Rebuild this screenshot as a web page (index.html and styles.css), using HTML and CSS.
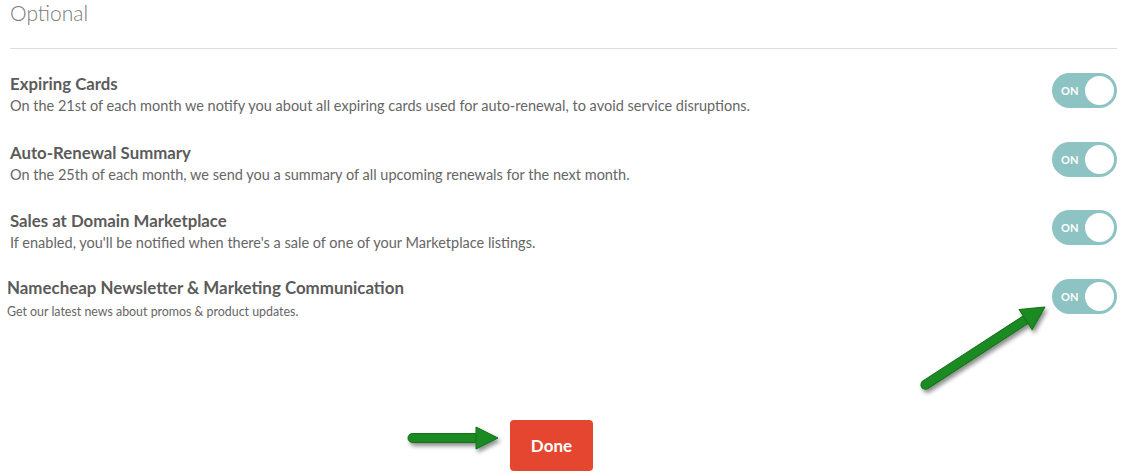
FILE: index.html
```html
<!DOCTYPE html>
<html lang="en">
<head>
    <meta charset="UTF-8">
    <title>Notification Settings</title>
    <link rel="stylesheet" href="styles.css">
</head>
<body>

    <main class="settings">
        <h2 class="heading">Optional</h2>

        <div class="option-list">
            <div class="option">
                <div class="option-text">
                    <div class="option-title">Expiring Cards</div>
                    <div class="option-desc">On the 21st of each month we notify you about all expiring cards used for auto-renewal, to avoid service disruptions.</div>
                </div>
                <div class="toggle"><span class="toggle-label">ON</span><span class="knob"></span></div>
            </div>

            <div class="option">
                <div class="option-text">
                    <div class="option-title">Auto-Renewal Summary</div>
                    <div class="option-desc">On the 25th of each month, we send you a summary of all upcoming renewals for the next month.</div>
                </div>
                <div class="toggle"><span class="toggle-label">ON</span><span class="knob"></span></div>
            </div>

            <div class="option">
                <div class="option-text">
                    <div class="option-title">Sales at Domain Marketplace</div>
                    <div class="option-desc">If enabled, you'll be notified when there's a sale of one of your Marketplace listings.</div>
                </div>
                <div class="toggle"><span class="toggle-label">ON</span><span class="knob"></span></div>
            </div>

            <div class="option option-newsletter">
                <div class="option-text">
                    <div class="option-title">Namecheap Newsletter &amp; Marketing Communication</div>
                    <div class="option-desc">Get our latest news about promos &amp; product updates.</div>
                </div>
                <div class="toggle"><span class="toggle-label">ON</span><span class="knob"></span></div>
            </div>
        </div>

        <div class="actions">
            <button type="button" class="done-button">Done</button>
        </div>
    </main>

    <!-- annotation arrows drawn over the page -->
    <svg class="annotations" width="1124" height="476" viewBox="0 0 1124 476">
        <defs>
            <filter id="shadow" x="-20%" y="-20%" width="140%" height="140%">
                <feDropShadow dx="2" dy="3" stdDeviation="2" flood-color="#000" flood-opacity="0.45"/>
            </filter>
        </defs>
        <g filter="url(#shadow)" fill="#1b8a22" stroke="#14701a" stroke-width="1">
            <g transform="translate(925 385) rotate(-33)">
                <rect x="-4" y="-4.5" width="130" height="9" rx="4.5"/>
                <path d="M120 -12 L143 0 L120 12 Z" stroke-linejoin="round"/>
            </g>
            <g transform="translate(412 438)">
                <rect x="-4" y="-4.5" width="72" height="9" rx="4.5"/>
                <path d="M64 -11 L86 0 L64 11 Z" stroke-linejoin="round"/>
            </g>
        </g>
    </svg>

</body>
</html>
```

FILE: styles.css
```css
body {
    font-family: Lato, 'Open Sans', sans-serif;
    margin: 0;
    padding: 0;
    background-color: #fff;
    color: #5b5b5b;
    width: 1124px;
    height: 476px;
    overflow: hidden;
    position: relative;
}

.settings {
    padding: 0 7px 0 10px;
}

.heading {
    margin: 0;
    font-size: 21px;
    font-weight: 300;
    line-height: 25px;
    color: #7a7a7a;
    padding-bottom: 23px;
    border-bottom: 1px solid #dcdcdc;
}

.option-list {
    padding-top: 24px;
}

.option {
    display: flex;
    justify-content: space-between;
    align-items: flex-start;
    height: 68.5px;
}

.option-title {
    font-size: 16.8px;
    font-weight: bold;
    line-height: 21px;
    color: #5b5b5b;
}

.option-desc {
    font-size: 14.5px;
    line-height: 22px;
    margin-top: 1px;
    color: #666;
}

.option-newsletter .option-text {
    margin-left: -3px;
}

.option-newsletter .option-title {
    font-size: 16.9px;
    line-height: 18px;
}

.option-newsletter .option-desc {
    font-size: 12.4px;
    line-height: 30px;
    margin-top: 0;
}

.toggle {
    position: relative;
    width: 65px;
    height: 35px;
    border-radius: 18px;
    background-color: #8dc3c2;
    flex-shrink: 0;
}

.toggle-label {
    display: block;
    padding-left: 9px;
    font-size: 11px;
    font-weight: bold;
    line-height: 35px;
    color: #fff;
}

.knob {
    position: absolute;
    top: 3px;
    right: 3px;
    width: 29px;
    height: 29px;
    border-radius: 50%;
    background-color: #fff;
}

.actions {
    padding-top: 73px;
    padding-left: 500px;
}

.done-button {
    display: block;
    background-color: #e4462f;
    color: #fff;
    width: 83px;
    height: 51px;
    border: none;
    border-radius: 4px;
    font-family: Lato, sans-serif;
    font-size: 17px;
    font-weight: bold;
    cursor: pointer;
}

.annotations {
    position: absolute;
    top: 0;
    left: 0;
    pointer-events: none;
}
```
